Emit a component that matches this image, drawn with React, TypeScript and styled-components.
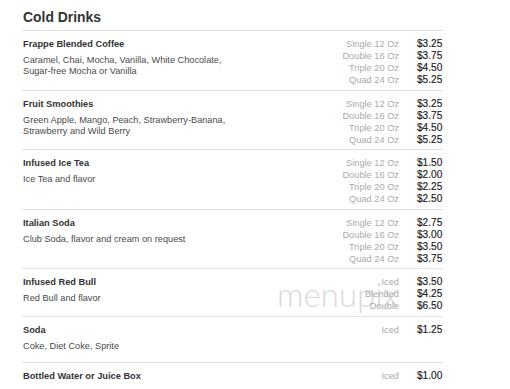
import React from "react"
import styled, { createGlobalStyle } from "styled-components"

const GlobalStyle = createGlobalStyle`
body{
  margin:0;
  background:#fff;
  font-family:"Liberation Sans", Arial, sans-serif;
}
`

type Price = { label: string; price: string }
type Item = { name: string; desc?: string[]; prices: Price[] }

const sizes = (a: string, b: string, c: string, d: string): Price[] => [
  { label: "Single 12 Oz", price: a },
  { label: "Double 16 Oz", price: b },
  { label: "Triple 20 Oz", price: c },
  { label: "Quad 24 Oz", price: d },
]

const items: Item[] = [
  {
    name: "Frappe Blended Coffee",
    desc: ["Caramel, Chai, Mocha, Vanilla, White Chocolate,", "Sugar-free Mocha or Vanilla"],
    prices: sizes("$3.25", "$3.75", "$4.50", "$5.25"),
  },
  {
    name: "Fruit Smoothies",
    desc: ["Green Apple, Mango, Peach, Strawberry-Banana,", "Strawberry and Wild Berry"],
    prices: sizes("$3.25", "$3.75", "$4.50", "$5.25"),
  },
  { name: "Infused Ice Tea", desc: ["Ice Tea and flavor"], prices: sizes("$1.50", "$2.00", "$2.25", "$2.50") },
  {
    name: "Italian Soda",
    desc: ["Club Soda, flavor and cream on request"],
    prices: sizes("$2.75", "$3.00", "$3.50", "$3.75"),
  },
  {
    name: "Infused Red Bull",
    desc: ["Red Bull and flavor"],
    prices: [
      { label: "Iced", price: "$3.50" },
      { label: "Blended", price: "$4.25" },
      { label: "Double", price: "$6.50" },
    ],
  },
  { name: "Soda", desc: ["Coke, Diet Coke, Sprite"], prices: [{ label: "Iced", price: "$1.25" }] },
  { name: "Bottled Water or Juice Box", prices: [{ label: "Iced", price: "$1.00" }] },
]

const Page = styled.div`
position:relative;
width:421px;
margin-left:22px;
`
const Title = styled.h2`
margin:0;
padding:9px 0 5px 1px;
height:16px;
line-height:16px;
font-size:13.9px;
font-weight:bold;
color:#333;
`
const Row = styled.div`
position:relative;
z-index:1;
display:flex;
align-items:flex-start;
border-top:1px solid #e2e2e2;
padding:7px 0 3.5px 0;
`
const Info = styled.div`
flex:1;
padding-left:1px;
margin-bottom:6.5px;
`
const Name = styled.div`
font-size:9.25px;
line-height:12px;
font-weight:bold;
color:#333;
`
const Desc = styled.div`
margin-top:5px;
font-size:9.2px;
line-height:11px;
color:#4a4a4a;
`
const PriceList = styled.div`
display:grid;
grid-template-columns:auto 26px;
column-gap:18px;
align-items:baseline;
line-height:12px;
`
const Label = styled.span`
text-align:right;
font-size:9.25px;
color:#aaa;
`
const Amount = styled.span`
font-size:10.1px;
color:#1a1a1a;
-webkit-text-stroke:0.15px #1a1a1a;
`
const Watermark = styled.div`
position:absolute;
z-index:0;
left:255px;
top:276px;
font-family:Lato, "Open Sans", sans-serif;
font-weight:300;
font-size:33px;
line-height:36px;
color:#dadada;
pointer-events:none;
`

const App = () => {
  return (
    <Page>
      <GlobalStyle />
      <Title>Cold Drinks</Title>
      <Watermark>menupix</Watermark>
      {items.map((item, index) => (
        <Row key={index}>
          <Info>
            <Name>{item.name}</Name>
            {item.desc && (
              <Desc>
                {item.desc.map((line, i) => (
                  <div key={i}>{line}</div>
                ))}
              </Desc>
            )}
          </Info>
          <PriceList>
            {item.prices.map((p, i) => (
              <React.Fragment key={i}>
                <Label>{p.label}</Label>
                <Amount>{p.price}</Amount>
              </React.Fragment>
            ))}
          </PriceList>
        </Row>
      ))}
    </Page>
  )
}
export default App
